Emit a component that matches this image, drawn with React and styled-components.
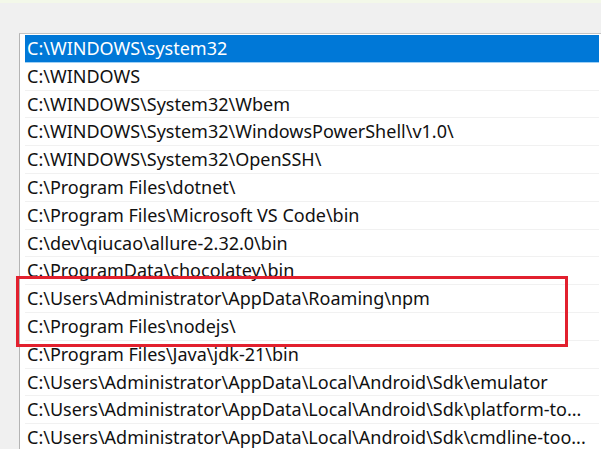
import React from "react";
import styled, { createGlobalStyle } from "styled-components";

const Global = createGlobalStyle`
  html, body { margin: 0; padding: 0; }
  body {
    background: #f0f0f0;
    overflow: hidden;
    width: 601px;
    height: 449px;
  }
`;

const Page = styled.div`
  width: 601px;
  height: 449px;
  overflow: hidden;
  background: #f0f0f0;
  display: flex;
  flex-direction: column;
`;

const TopStrip = styled.div`
  height: 3px;
  background: #f3f8e9;
  flex: none;
`;

const Body = styled.div`
  flex: 1;
  padding: 30px 0 0 19px;
  position: relative;
`;

const ListBox = styled.div`
  width: 620px;
  height: 460px;
  background: #ffffff;
  border-top: 1px solid #c4c4c4;
  border-left: 1px solid #b4b4b4;
  padding: 1px 0 0 5px;
  box-sizing: border-box;
`;

const Rows = styled.div`
  width: 574px;
  display: flex;
  flex-direction: column;
`;

const Row = styled.div`
  height: 27.8px;
  box-sizing: border-box;
  border-bottom: 1px solid ${(p) => (p.$selected ? "#9fd0f5" : "#f1f1f1")};
  background: ${(p) => (p.$selected ? "#0078d7" : "transparent")};
  color: ${(p) => (p.$selected ? "#ffffff" : "#111111")};
  font-family: "Noto Sans", "Open Sans", sans-serif;
  font-size: 18px;
  line-height: 26px;
  padding-left: 2px;
  white-space: nowrap;
  overflow: hidden;
`;

const Highlight = styled.div`
  position: absolute;
  left: 16px;
  top: 273px;
  width: 552px;
  height: 71px;
  box-sizing: border-box;
  border: 3px solid #e2202e;
  pointer-events: none;
`;

const paths = [
  "C:\\WINDOWS\\system32",
  "C:\\WINDOWS",
  "C:\\WINDOWS\\System32\\Wbem",
  "C:\\WINDOWS\\System32\\WindowsPowerShell\\v1.0\\",
  "C:\\WINDOWS\\System32\\OpenSSH\\",
  "C:\\Program Files\\dotnet\\",
  "C:\\Program Files\\Microsoft VS Code\\bin",
  "C:\\dev\\qiucao\\allure-2.32.0\\bin",
  "C:\\ProgramData\\chocolatey\\bin",
  "C:\\Users\\Administrator\\AppData\\Roaming\\npm",
  "C:\\Program Files\\nodejs\\",
  "C:\\Program Files\\Java\\jdk-21\\bin",
  "C:\\Users\\Administrator\\AppData\\Local\\Android\\Sdk\\emulator",
  "C:\\Users\\Administrator\\AppData\\Local\\Android\\Sdk\\platform-to...",
  "C:\\Users\\Administrator\\AppData\\Local\\Android\\Sdk\\cmdline-too...",
];

export default function App() {
  return (
    <Page>
      <Global />
      <TopStrip />
      <Body>
        <ListBox>
          <Rows>
            {paths.map((p, i) => (
              <Row key={i} $selected={i === 0}>
                {p}
              </Row>
            ))}
          </Rows>
        </ListBox>
        <Highlight />
      </Body>
    </Page>
  );
}
